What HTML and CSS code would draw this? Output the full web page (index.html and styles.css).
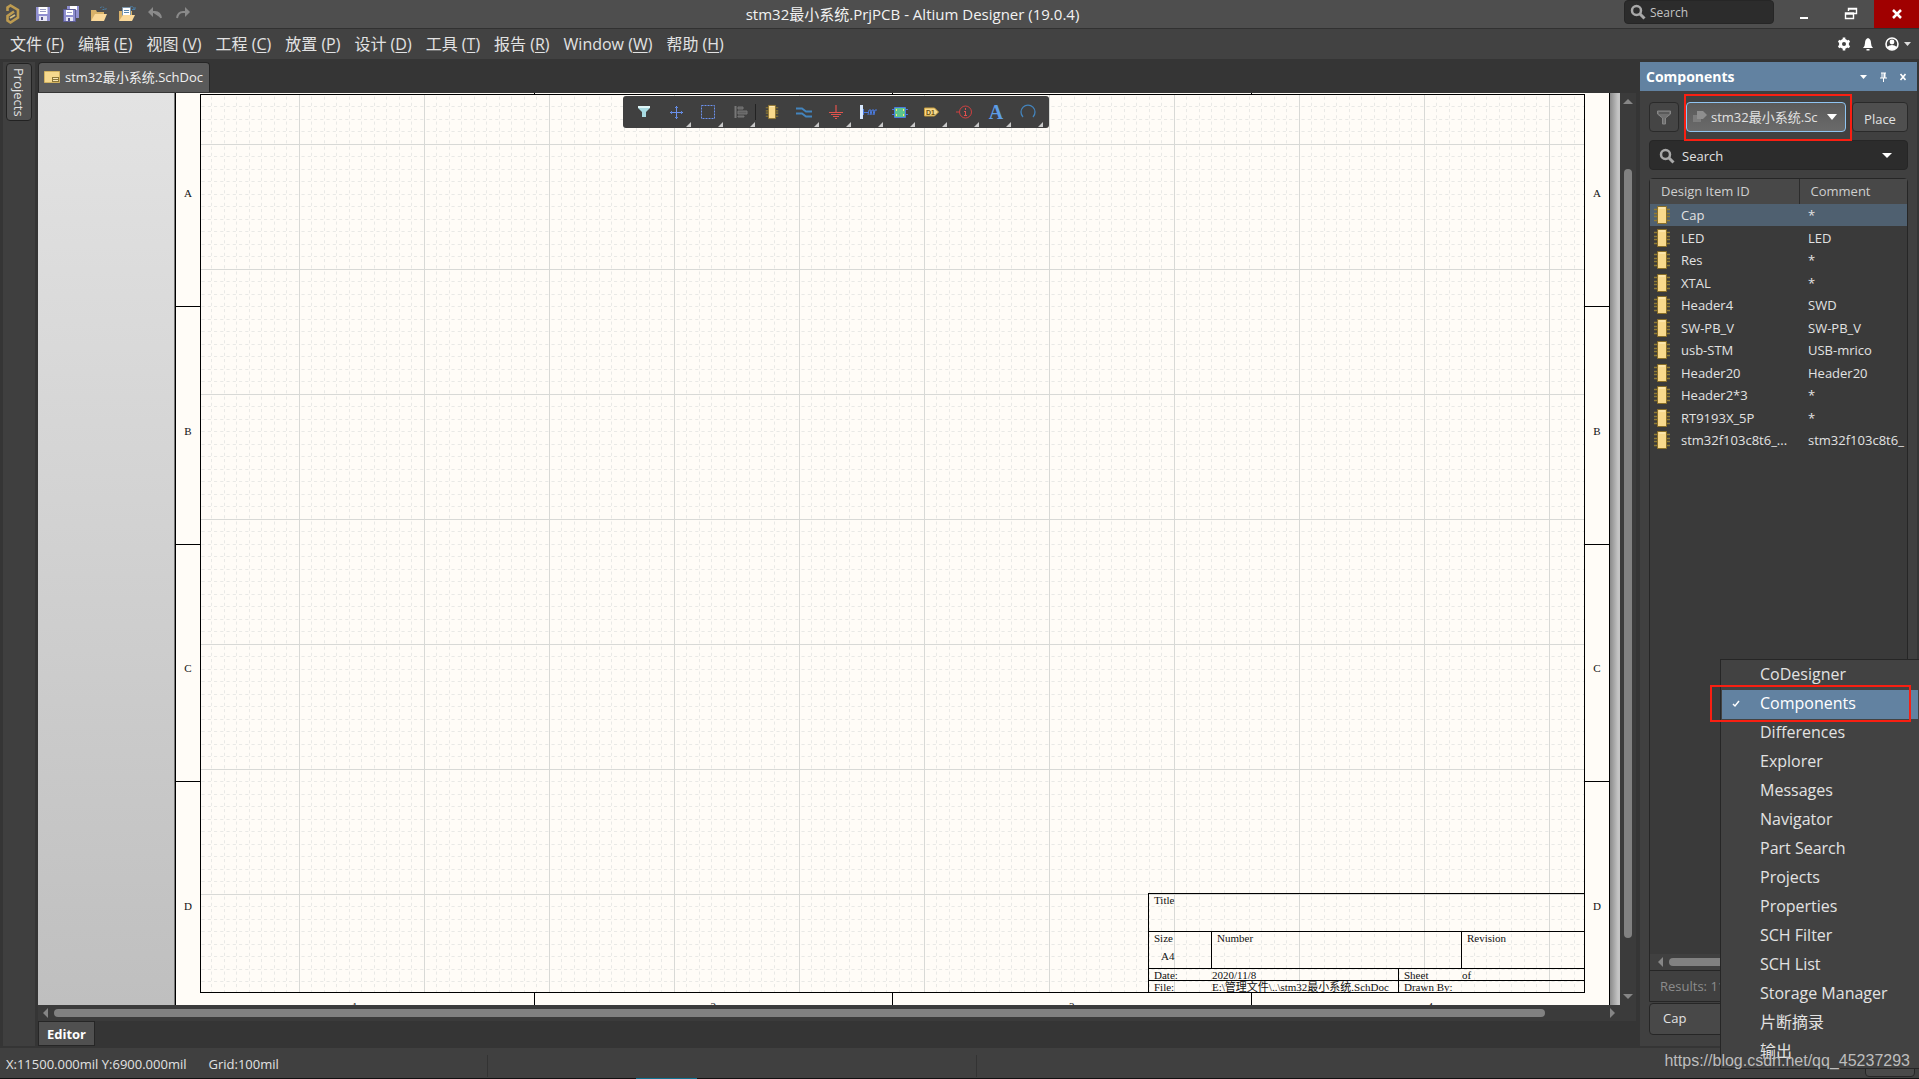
FILE: index.html
```html
<!DOCTYPE html>
<html lang="zh">
<head>
  <meta charset="UTF-8" />
  <meta name="viewport" content="width=device-width, initial-scale=1.0"/>
  <title>stm32最小系统.PrjPCB - Altium Designer (19.0.4)</title>
  <link rel="stylesheet" href="styles.css">
</head>
<body>
  <!-- shared symbols -->
  <svg class="defs" width="0" height="0">
    <symbol id="chip" viewBox="0 0 18 18">
      <path d="M1 3.500h16M1 7.500h16M1 10.500h16M1 14.500h16" stroke="#8f7a33" stroke-width="1.500"/>
      <path d="M4.500 .5h9v17h-9z" fill="#f8d98c" stroke="#8a6f27"/>
      <path d="M6 2h6" stroke="#fff0c4"/>
    </symbol>
    <symbol id="lens" viewBox="0 0 16 16">
      <circle cx="6.500" cy="6.500" r="4.500" fill="none" stroke="#a8a8a8" stroke-width="2.500"/>
      <path d="M10 10l4.500 4.500" stroke="#a8a8a8" stroke-width="3"/>
    </symbol>
  </svg>

  <header class="titlebar">
    <div class="quick">
      <svg class="logo" width="14" height="20" viewBox="0 0 14 20"><path d="M1.500 7V3.500L4.500 1.500l7.500 4.500v7.500L4.500 18.500l-3-2v-4.500L8 7.500" fill="none" stroke="#bd9b50" stroke-width="2.600"/><path d="M4 14l5-3" stroke="#d8bd78" stroke-width="2"/></svg>
      <button aria-label="Save"><svg width="16" height="16" viewBox="0 0 16 16"><path d="M1 1h14v14H1z" fill="#8f8fd0"/><path d="M3.500 1h9v7h-9z" fill="#fff"/><path d="M5 3.500h6M5 5.500h6" stroke="#999cc4"/><path d="M4 10h8v5H4z" fill="#e6e6f4"/><path d="M6 11h2v3H6z" fill="#55558c"/></svg></button>
      <button aria-label="Save all"><svg width="18" height="18" viewBox="0 0 18 18"><path d="M5 1h12v12H5z" fill="#8f8fd0"/><path d="M8 1h7v4H8z" fill="#fff"/><path d="M1.500 4.500h12v12h-12z" fill="#8f8fd0" stroke="#5b5b95"/><path d="M4 5h7v5H4z" fill="#fff"/><path d="M5 7.500h5" stroke="#999cc4"/><path d="M4 12h7v4H4z" fill="#e6e6f4"/><path d="M6 13h2v3H6z" fill="#55558c"/></svg></button>
      <button aria-label="Open"><svg width="18" height="18" viewBox="0 0 18 18"><path d="M1 16V5h5l1 2h7v3" fill="#d9b26a"/><path d="M1 16l4-7h12l-3 7z" fill="#fbd99a"/><path d="M10 3c2-2 4-1 5 1M12.500 4.500H16V2" fill="none" stroke="#4a7ea6" stroke-dasharray="2 1"/></svg></button>
      <button aria-label="Open project"><svg width="18" height="18" viewBox="0 0 18 18"><path d="M1 16V6h13v4z" fill="#d9b26a"/><path d="M4.500 2.500h8v8h-8z" fill="#fff" stroke="#7c96ad"/><path d="M6 5.500h5M6 7.500h5" stroke="#5b87ad"/><path d="M1 16l4-6h12l-3 6z" fill="#fbd99a"/><path d="M12 2c2-1 4 0 4 2M14 4.500h3V2" fill="none" stroke="#4a7ea6"/></svg></button>
      <button aria-label="Undo"><svg width="16" height="16" viewBox="0 0 16 16"><path d="M6 1v10L1 6zM5 6h3q5 0 6 6" fill="#8a8a8a"/><path d="M5 6h3q5 0 6 6" fill="none" stroke="#8a8a8a" stroke-width="2"/></svg></button>
      <button aria-label="Redo"><svg width="16" height="16" viewBox="0 0 16 16"><path d="M10 1v10l5-5z" fill="#8a8a8a"/><path d="M11 6H8q-5 0-6 6" fill="none" stroke="#8a8a8a" stroke-width="2"/></svg></button>
    </div>
    <h1>stm32最小系统.PrjPCB - Altium Designer (19.0.4)</h1>
    <div class="window-tools">
      <label class="top-search"><svg width="16" height="16"><use href="#lens"/></svg><input type="text" value="Search" aria-label="Search"></label>
      <button class="win" aria-label="Minimize"><svg width="12" height="12"><path d="M2 10h8" stroke="#fff" stroke-width="2"/></svg></button>
      <button class="win" aria-label="Restore"><svg width="14" height="14" viewBox="0 0 14 14"><path d="M4.500 4V1.500h8v5H10M4 2h9M1 7h9M1.500 6v5.500h8V6z" fill="none" stroke="#fff" stroke-width="1.400"/></svg></button>
      <button class="win close" aria-label="Close"><svg width="12" height="12"><path d="M2 2l8 8M10 2l-8 8" stroke="#fff" stroke-width="2.500"/></svg></button>
    </div>
  </header>

  <nav class="menubar">
    <button>文件 (<u>F</u>)</button>
    <button>编辑 (<u>E</u>)</button>
    <button>视图 (<u>V</u>)</button>
    <button>工程 (<u>C</u>)</button>
    <button>放置 (<u>P</u>)</button>
    <button>设计 (<u>D</u>)</button>
    <button>工具 (<u>T</u>)</button>
    <button>报告 (<u>R</u>)</button>
    <button>Window (<u>W</u>)</button>
    <button>帮助 (<u>H</u>)</button>
    <div class="account">
      <svg width="14" height="14" viewBox="0 0 14 14"><circle cx="7" cy="7" r="3.500" fill="none" stroke="#fff" stroke-width="3"/><path d="M7 .5v13M1.500 3.800l11 6.400M1.500 10.200l11-6.400" stroke="#fff" stroke-width="2.600"/><circle cx="7" cy="7" r="2" fill="#424242"/></svg>
      <svg width="12" height="14" viewBox="0 0 12 14"><path d="M1 11q2-2 2-5 0-4 3-5 3 1 3 5 0 3 2 5zM4.500 12h3v1.500h-3z" fill="#fff"/></svg>
      <svg width="26" height="14" viewBox="0 0 26 14"><circle cx="7" cy="7" r="6" fill="none" stroke="#fff" stroke-width="1.600"/><circle cx="7" cy="5" r="2.400" fill="#fff"/><path d="M2 10q5-4 10 0-5 6-10 0z" fill="#fff"/><path d="M19 5h7l-3.500 4z" fill="#ddd"/></svg>
    </div>
  </nav>

  <main class="workspace">
    <aside class="dock"><button>Projects</button></aside>

    <section class="center">
      <div class="doc-tabs">
        <button><svg width="16" height="12" viewBox="0 0 16 12"><path d="M.5.5h15v11H.5z" fill="#f6d98e" stroke="#d2b361"/><path d="M8 6h7v5H8z" fill="#8c7638"/><path d="M9 7.500h5M9 9.500h5" stroke="#f6e6b6"/></svg>stm32最小系统.SchDoc</button>
      </div>
      <div class="view">
        <div class="view-main">
          <div class="canvas">
            <div class="desk"></div>
            <div class="sheet">
              <div class="zones-top"><i></i><i></i><i></i><i></i></div>
              <div class="sheet-mid">
                <div class="zones-side"><div><span>A</span><span>B</span><span>C</span><span>D</span></div></div>
                <div class="frame">
                  <svg class="grid" width="100%" height="100%">
                    <defs>
                      <pattern id="grid" x="98" y="49" width="125" height="125" patternUnits="userSpaceOnUse">
                        <g fill="none" stroke="#e9e9e6" stroke-dasharray="3 3" transform="translate(.5 .5)">
                          <path pathLength="1080" d="M12 2v125M25 2v125M37 2v125M50 2v125M62 2v125M75 2v125M87 2v125M100 2v125M112 2v125"/>
                          <path pathLength="1080" d="M2 12h125M2 25h125M2 37h125M2 50h125M2 62h125M2 75h125M2 87h125M2 100h125M2 112h125"/>
                        </g>
                        <path d="M.5 0v125M0 .5h125" stroke="#d8d9d6"/>
                      </pattern>
                    </defs>
                    <rect width="100%" height="100%" fill="url(#grid)"/>
                  </svg>
                  <div class="title-block">
                    <div class="tb-row tall"><span>Title</span></div>
                    <div class="tb-row tall"><span class="w-size">Size<b>A4</b></span><span class="w-wide">Number</span><span>Revision</span></div>
                    <div class="tb-row"><span class="w-size bare">Date:</span><span class="w-date">2020/11/8</span><span class="w-size bare">Sheet</span><span class="bare of">of</span></div>
                    <div class="tb-row"><span class="w-size bare">File:</span><span class="w-date">E:\管理文件\..\stm32最小系统.SchDoc</span><span class="bare">Drawn By:</span></div>
                  </div>
                </div>
                <div class="zones-side"><div><span>A</span><span>B</span><span>C</span><span>D</span></div></div>
              </div>
              <div class="zones-bottom"><span>1</span><span>2</span><span>3</span><span>4</span></div>
            </div>
            <div class="shade"></div>
          </div>
          <div class="hscroll">
            <svg width="5" height="10"><path d="M5 0v10L0 5z" fill="#868686"/></svg>
            <div class="thumb"></div>
            <svg width="5" height="10"><path d="M0 0v10l5-5z" fill="#868686"/></svg>
          </div>
        </div>
        <div class="vscroll">
          <svg width="10" height="5"><path d="M0 5h10L5 0z" fill="#868686"/></svg>
          <div class="thumb"></div>
          <svg width="10" height="5"><path d="M0 0h10L5 5z" fill="#868686"/></svg>
        </div>

        <!-- floating active bar -->
        <div class="active-bar">
          <button aria-label="Filter"><svg width="16" height="16" viewBox="0 0 16 16"><path d="M2 2h12v2l-4 4v5H6V8L2 4z" fill="#a9dbe2"/><path d="M2 3h12" stroke="#dff5f7" stroke-width="2"/></svg></button>
          <button class="more" aria-label="Move"><svg width="16" height="16" viewBox="0 0 16 16"><path d="M8.500 2v13M2 8.500h13" stroke="#6c92ee"/><path d="M7 3.500h3M7 13.500h3M3.500 7v3M13.500 7v3" stroke="#5d84d6"/></svg></button>
          <button class="more" aria-label="Select"><svg width="16" height="16" viewBox="0 0 16 16"><path d="M1.500 1.500h13v13h-13z" fill="none" stroke="#6c92ee" stroke-dasharray="2 1"/></svg></button>
          <button class="more sep" aria-label="Align"><svg width="16" height="16" viewBox="0 0 16 16"><path d="M3.500 2v12" stroke="#777" stroke-width="2"/><path d="M6 3h5v2H6zM6 7h9v3H6zM6 12h6v1H6z" fill="#606060" stroke="#777"/></svg></button>
          <button aria-label="Part"><svg width="14" height="16"><use href="#chip"/></svg></button>
          <button class="more" aria-label="Wire"><svg width="18" height="16" viewBox="0 0 18 16"><path d="M1 4.500h6l4 3h6M1 9.500h6l4 3h6" fill="none" stroke="#4384bd" stroke-width="2"/></svg></button>
          <button class="more" aria-label="Power port"><svg width="16" height="16" viewBox="0 0 16 16"><path d="M8 1v8M1 8.500h14M3 10.500h10M5 12.500h6M7 14.500h2" stroke="#e2534d" stroke-width="1.200"/></svg></button>
          <button class="more" aria-label="Harness"><svg width="18" height="16" viewBox="0 0 18 16"><path d="M1 1h3v14H1z" fill="#d7e8ff"/><path d="M4 5h1v6H4z" fill="#4a7be0"/><path d="M5 8.500h5M9 11l1-5h2l-1 5M12 11l1-5h2l-1 5M15 11l1-5h2" fill="none" stroke="#4a7be0"/></svg></button>
          <button class="more" aria-label="Sheet symbol"><svg width="16" height="16" viewBox="0 0 16 16"><path d="M0 5.500h16M0 10.500h16" stroke="#4a7be0"/><path d="M2.500 3.500h11v10h-11z" fill="#5cc58d" stroke="#4a7be0"/><path d="M4 6h1M11 6h1M4 11h1M11 11h1" stroke="#ffe27c" stroke-width="2"/></svg></button>
          <button class="more" aria-label="Port"><svg width="16" height="16" viewBox="0 0 16 16"><path d="M.5 4h10l4 4-4 4H.5z" fill="#f8d98c" stroke="#c69d3c"/><text x="2" y="11" class="port-text">D1</text></svg></button>
          <button class="more" aria-label="Directive"><svg width="16" height="16" viewBox="0 0 16 16"><circle cx="9.500" cy="8" r="6" fill="none" stroke="#cf4040"/><path d="M0 8h3" stroke="#cf4040"/><path d="M9.500 4v2M9.500 7v5M8 7.500h1.500M8 11.500h3" stroke="#e05050"/></svg></button>
          <button class="more letter" aria-label="Text">A</button>
          <button class="more" aria-label="Arc"><svg width="16" height="16" viewBox="0 0 16 16"><path d="M3 13A7 7 0 1 1 13 13" fill="none" stroke="#4384bd" stroke-width="1.300"/></svg></button>
        </div>
      </div>
      <div class="editor-tabs"><button>Editor</button></div>
    </section>

    <aside class="panel">
      <header>
        <h2>Components</h2>
        <svg width="46" height="10" viewBox="0 0 46 10"><path d="M0 3h7L3.500 7z" fill="#fff"/><path d="M21 1h5M22 1v5M20 6h7M23.500 6v4" stroke="#fff"/><path d="M24.500 1v5" stroke="#fff" stroke-width="2"/><path d="M40.500 2l5 6M45.500 2l-5 6" stroke="#fff" stroke-width="1.600"/></svg>
      </header>
      <div class="panel-body">
        <div class="lib-row">
          <button class="filter" aria-label="Filter"><svg width="16" height="16" viewBox="0 0 16 16"><path d="M1.500 2h13v3L9.500 9v6h-3V9l-5-4z" fill="#707070" stroke="#868686"/><path d="M3 4h10" stroke="#454545"/></svg></button>
          <div class="lib-select">
            <svg class="lib-icon" width="14" height="12" viewBox="0 0 14 12"><path d="M0 4h8v7H0z" fill="#7c7c7c"/><path d="M4 0h6l4 4-4 4H4z" fill="#8e8e8e"/></svg>
            <select aria-label="Library"><option>stm32最小系统.SchLib</option></select>
            <svg class="lib-arrow" width="10" height="6"><path d="M0 0h10L5 6z" fill="#fff"/></svg>
          </div>
          <button class="place">Place</button>
        </div>
        <label class="panel-search"><svg width="16" height="16"><use href="#lens"/></svg><input type="text" value="Search" aria-label="Search parts"><svg width="10" height="6"><path d="M0 0h10L5 5z" fill="#fff"/></svg></label>
        <div class="part-list">
          <table>
            <thead><tr><th>Design Item ID</th><th>Comment</th></tr></thead>
            <tbody>
              <tr class="selected"><td><svg width="18" height="18"><use href="#chip"/></svg>Cap</td><td>*</td></tr>
              <tr><td><svg width="18" height="18"><use href="#chip"/></svg>LED</td><td>LED</td></tr>
              <tr><td><svg width="18" height="18"><use href="#chip"/></svg>Res</td><td>*</td></tr>
              <tr><td><svg width="18" height="18"><use href="#chip"/></svg>XTAL</td><td>*</td></tr>
              <tr><td><svg width="18" height="18"><use href="#chip"/></svg>Header4</td><td>SWD</td></tr>
              <tr><td><svg width="18" height="18"><use href="#chip"/></svg>SW-PB_V</td><td>SW-PB_V</td></tr>
              <tr><td><svg width="18" height="18"><use href="#chip"/></svg>usb-STM</td><td>USB-mrico</td></tr>
              <tr><td><svg width="18" height="18"><use href="#chip"/></svg>Header20</td><td>Header20</td></tr>
              <tr><td><svg width="18" height="18"><use href="#chip"/></svg>Header2*3</td><td>*</td></tr>
              <tr><td><svg width="18" height="18"><use href="#chip"/></svg>RT9193X_5P</td><td>*</td></tr>
              <tr><td><svg width="18" height="18"><use href="#chip"/></svg>stm32f103c8t6_...</td><td>stm32f103c8t6_</td></tr>
            </tbody>
          </table>
          <div class="hscroll list-scroll">
            <svg width="5" height="10"><path d="M5 0v10L0 5z" fill="#868686"/></svg>
            <div class="thumb"></div>
          </div>
          <div class="results">Results: 11</div>
        </div>
        <button class="part-name">Cap</button>
      </div>
    </aside>
  </main>

  <footer class="statusbar">
    <span>X:11500.000mil Y:6900.000mil</span>
    <span>Grid:100mil</span>
    <button class="panels-btn">Panels</button>
  </footer>
  <div class="taskbar"><i></i></div>

  <ul class="popup">
    <li><button>CoDesigner</button></li>
    <li><button class="checked"><svg width="8" height="8"><path d="M1 4l2 2 4-5" fill="none" stroke="#fff" stroke-width="1.500"/></svg>Components</button></li>
    <li><button>Differences</button></li>
    <li><button>Explorer</button></li>
    <li><button>Messages</button></li>
    <li><button>Navigator</button></li>
    <li><button>Part Search</button></li>
    <li><button>Projects</button></li>
    <li><button>Properties</button></li>
    <li><button>SCH Filter</button></li>
    <li><button>SCH List</button></li>
    <li><button>Storage Manager</button></li>
    <li><button>片断摘录</button></li>
    <li><button>输出</button></li>
  </ul>

  <!-- annotations -->
  <div class="mark mark-lib"></div>
  <div class="mark mark-menu"></div>
  <div class="watermark">https://blog.csdn.net/qq_45237293</div>
</body>
</html>
```
FILE: styles.css
```css
* { box-sizing: border-box; }
body {
  margin: 0;
  height: 100vh;
  position: relative;
  display: flex;
  flex-direction: column;
  overflow: hidden;
  background: #353535;
  color: #e2e2e2;
  font-family: "Open Sans", "Noto Sans CJK SC", sans-serif;
  font-size: 13px;
}
button, input, select { font: inherit; color: inherit; margin: 0; padding: 0; border: none; background: none; }
input, select { min-width: 0; outline: none; }
svg { display: block; flex: none; }
.defs { position: absolute; }

/* title bar */
.titlebar {
  flex: none;
  height: 29px;
  display: grid;
  grid-template-columns: 1fr auto 1fr;
  background: #4e4e4e;
  border-bottom: 1px solid #313131;
}
.titlebar h1 { margin: 0; padding-right: 94px; font-size: 15px; font-weight: 400; line-height: 28px; color: #f2f2f2; }
.quick { display: flex; align-items: center; gap: 10px; padding-left: 6px; }
.quick button { width: 18px; display: flex; justify-content: center; }
.quick .logo { margin-right: 4px; }
.window-tools { display: flex; justify-content: flex-end; }
.top-search {
  width: 150px;
  height: 24px;
  display: flex;
  align-items: center;
  gap: 4px;
  padding: 0 5px;
  background: #2c2c2c;
  border: 1px solid #262626;
  border-radius: 4px;
}
.top-search input { width: 100%; font-size: 12px; color: #c4c4c4; }
.win { width: 47px; display: flex; align-items: center; justify-content: center; }
.top-search + .win { margin-left: 6px; }
.win.close { width: 45px; background: #a00000; }

/* menu bar */
.menubar { flex: none; height: 30px; display: flex; align-items: center; gap: 14px; padding: 0 8px 0 10px; background: #424242; }
.menubar button { font-size: 16px; line-height: 30px; }
.menubar u { text-underline-offset: 2px; }
.account { margin-left: auto; display: flex; align-items: center; gap: 11px; }

.workspace { flex: 1; min-height: 0; display: flex; padding: 3px 2px 2px 3px; }
.dock { width: 32px; margin-right: 3px; padding: 1px 3px; background: #3f3f3f; }
.dock button {
  width: 26px;
  height: 58px;
  writing-mode: vertical-rl;
  background: #505050;
  border: 1px solid #222;
  border-radius: 4px;
}

/* document */
.center { flex: 1; min-width: 0; display: flex; flex-direction: column; }
.doc-tabs { height: 31px; }
.doc-tabs button {
  height: 30px;
  display: flex;
  align-items: center;
  gap: 5px;
  padding: 0 6px 2px 5px;
  background: #5a5a5a;
  border: 1px solid #262626;
  border-bottom: none;
  border-radius: 4px 4px 0 0;
  color: #f0f0f0;
}
.view { flex: 1; min-height: 0; position: relative; display: flex; }
.view-main { flex: 1; min-width: 0; display: flex; flex-direction: column; }
.canvas { flex: 1; min-height: 0; display: flex; overflow: hidden; }
.desk { width: 137px; background: linear-gradient(#e3e3e3, #bfbfbf); border-right: 1px solid #777; }
.shade { width: 10px; background: linear-gradient(90deg, #8a8a8a, #c4c4c4 80%); }
.sheet {
  flex: 1;
  display: flex;
  flex-direction: column;
  background: #fffcf7;
  border: solid #000;
  border-width: 0 1px;
  color: #111;
  font: 11px/13px "Liberation Serif", "Noto Sans CJK SC", serif;
}
.zones-top { height: 1px; display: flex; }
.zones-top i { flex: 1; }
.sheet i + i, .zones-bottom span + span { border-left: 1px solid #000; }
.sheet-mid { flex: 1; min-height: 0; display: flex; }
.zones-side { width: 24px; overflow: hidden; }
.zones-side div { height: calc(100% + 51px); margin-top: -25px; display: flex; flex-direction: column; }
.zones-side span { flex: 1; display: flex; align-items: center; justify-content: center; padding-top: 12px; }
.zones-side span + span { border-top: 1px solid #000; }
.frame { flex: 1; position: relative; border: 1px solid #000; }
.grid { position: absolute; }
.zones-bottom { height: 12px; display: flex; overflow: hidden; }
.zones-bottom span { flex: 1; padding-top: 7px; text-align: center; }

.title-block { position: absolute; right: -1px; bottom: -1px; width: 437px; border: 1px solid #000; }
.tb-row { height: 12px; display: flex; line-height: 12px; white-space: nowrap; }
.tb-row + .tb-row { border-top: 1px solid #000; }
.tb-row.tall { height: 37px; }
.tb-row span { padding-left: 5px; flex: 1; border-right: 1px solid #000; }
.tb-row span:last-child, .tb-row .bare { border-right: none; }
.tb-row b { display: block; padding: 6px 0 0 7px; font-weight: 400; }
.tb-row .w-size { flex: none; width: 63px; }
.tb-row .w-wide { flex: none; width: 250px; }
.tb-row .w-date { flex: none; width: 187px; padding-left: 0; }
.tb-row .of { padding-left: 0; }

/* scrollbars */
.hscroll { height: 16px; display: flex; align-items: center; gap: 6px; padding: 0 5px 0 5px; background: #3b3b3b; }
.thumb { background: #818181; border-radius: 4px; }
.hscroll .thumb { flex: 1; height: 8px; margin-right: 59px; }
.vscroll { width: 16px; display: flex; flex-direction: column; align-items: center; padding: 6px 0 22px; background: #3b3b3b; }
.vscroll .thumb { flex: 1; width: 8px; margin: 65px 0 56px; }

.active-bar {
  position: absolute;
  top: 3px;
  left: 0;
  right: 2px;
  width: 426px;
  margin: 0 auto;
  height: 32px;
  display: flex;
  padding: 0 5px;
  background: #404040;
  border-radius: 3px;
}
.active-bar button { position: relative; width: 32px; display: flex; align-items: center; justify-content: center; }
.active-bar .more::after {
  content: "";
  position: absolute;
  right: 1px;
  bottom: 1px;
  border: solid transparent;
  border-width: 5px 0 0 5px;
  border-right: 5px solid #c8c8c8;
  border-left: none;
}
.active-bar .sep::before { content: ""; position: absolute; right: 0; top: 8px; width: 1px; height: 16px; background: #222; }
.active-bar .letter { font: bold 20px "Liberation Serif", serif; color: #5d9de6; }
.port-text { font: bold 7px "Liberation Sans", sans-serif; fill: #6d5410; }

.editor-tabs { height: 25px; }
.editor-tabs button {
  width: 57px;
  height: 25px;
  background: #505050;
  border: 1px solid #262626;
  font-weight: 700;
  line-height: 25px;
  color: #fff;
}

/* Components panel */
.panel { width: 277px; margin-left: 4px; display: flex; flex-direction: column; background: #404040; }
.panel header { height: 29px; display: flex; align-items: center; justify-content: space-between; padding: 0 11px 0 6px; background: #6282a1; }
.panel h2 { margin: 0; font-size: 14px; color: #fff; }
.panel-body { flex: 1; min-height: 0; display: flex; flex-direction: column; padding: 11px 9px 11px; }
.lib-row { height: 30px; display: flex; }
.lib-row button { border: 1px solid #2a2a2a; border-radius: 4px; }
.filter { width: 30px; display: flex; align-items: center; justify-content: center; background: #454545; }
.lib-select {
  flex: 1;
  min-width: 0;
  display: flex;
  align-items: center;
  gap: 4px;
  margin: 0 6px 0 7px;
  padding: 0 8px 0 6px;
  background: linear-gradient(#5a5a5a, #6a6a6a);
  border: 1px solid #8fc4f2;
  border-radius: 4px;
}
.lib-select select { flex: 1; appearance: none; overflow: hidden; text-overflow: clip; }
.lib-arrow { margin-left: 5px; }
.place { width: 56px; background: #4f4f4f; line-height: 32px; }
.panel-search {
  height: 30px;
  display: flex;
  align-items: center;
  gap: 7px;
  margin: 8px 0;
  padding: 1px 15px 0 9px;
  background: #2c2c2c;
  border: 1px solid #262626;
  border-radius: 4px;
}
.panel-search input { flex: 1; }
.part-list { flex: 1; display: flex; flex-direction: column; background: #3a3a3a; border: 1px solid #262626; border-radius: 4px 4px 0 0; }
.part-list table { width: 100%; table-layout: fixed; border-collapse: collapse; margin-bottom: auto; }
.part-list th { height: 25px; padding: 0 11px 2px; background: #484848; text-align: left; font-weight: 400; color: #cfcfcf; }
.part-list th:first-child { width: 149px; border-right: 1px solid #2c2c2c; }
.part-list td { height: 22px; padding: 0 0 0 9px; white-space: nowrap; overflow: hidden; line-height: 20px; }
.part-list tr:nth-child(even) td { height: 23px; }
.part-list td:first-child { display: flex; align-items: center; gap: 10px; padding-left: 3px; }
.selected { background: #4f6070; }
.list-scroll { padding-left: 8px; background: #404040; }
.list-scroll .thumb { margin-right: 10px; }
.results { height: 31px; padding-left: 10px; border-top: 1px solid #262626; line-height: 31px; color: #8c8c8c; background: #404040; }
.part-name { height: 32px; margin-top: 1px; padding: 0 0 2px 13px; text-align: left; background: #484848; border: 1px solid #262626; border-radius: 4px; }

/* status bar */
.statusbar { flex: none; position: relative; height: 30px; display: flex; align-items: center; gap: 22px; padding: 1px 4px 0 6px; background: #404040; }
.statusbar::before {
  content: "";
  position: absolute;
  left: 487px;
  top: 7px;
  width: 488px;
  height: 22px;
  border: solid #333;
  border-width: 0 1px;
}
.panels-btn { margin-left: auto; width: 50px; height: 27px; background: #4a4a4a; border: 1px solid #262626; border-radius: 4px; }
.taskbar { flex: none; height: 1px; padding-left: 636px; background: #111; }
.taskbar i { display: block; width: 61px; height: 1px; background: #0f7391; }

.popup {
  position: absolute;
  right: 0;
  bottom: 10px;
  width: 199px;
  margin: 0;
  padding: 1px;
  list-style: none;
  background: #424242;
  border: 1px solid #262626;
  border-right: none;
  font-size: 16px;
}
.popup button { position: relative; width: 100%; height: 29px; display: block; padding: 0 0 2px 38px; text-align: left; line-height: 27px; }
.popup .checked { background: #6282a1; color: #fff; }
.popup svg { position: absolute; left: 10px; top: 10px; }

.mark { position: absolute; border: 2px solid #f91f12; }
.mark-lib { top: 94px; right: 67px; width: 168px; height: 47px; }
.mark-menu { bottom: 357px; right: 8px; width: 201px; height: 37px; }
.watermark { position: absolute; right: 9px; bottom: 8px; font: 16px/20px "Liberation Sans", sans-serif; color: #bdbdbd; }
```
